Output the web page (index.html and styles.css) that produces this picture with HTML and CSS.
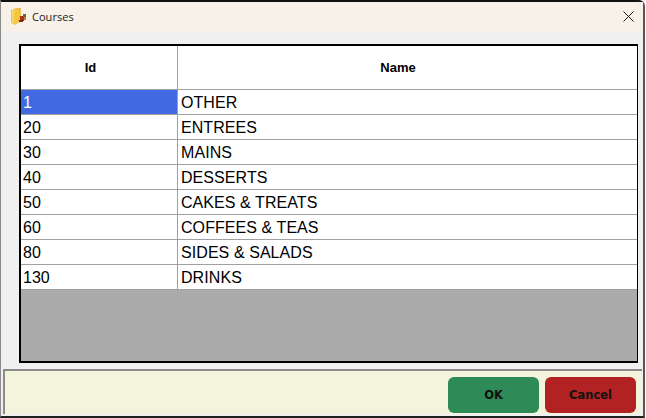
FILE: index.html
```html
<!DOCTYPE html>
<html lang="en">
<head>
<meta charset="utf-8">
<title>Courses</title>
<link rel="stylesheet" href="styles.css">
</head>
<body>
<div class="window">
  <header class="titlebar">
    <svg class="app-icon" width="16" height="17" viewBox="0 0 16 17">
      <defs>
        <linearGradient id="folder" x1="0" y1="0" x2="1" y2="0">
          <stop offset="0" stop-color="#f7dc74"/>
          <stop offset="0.6" stop-color="#f6c945"/>
          <stop offset="1" stop-color="#e2a72e"/>
        </linearGradient>
      </defs>
      <path d="M0.5 2.5 L5 0.5 H9.5 V13 L3.5 16.5 L0.5 14.5 Z" fill="url(#folder)" stroke="#dcb24a" stroke-width="0.7"/>
      <path d="M3.5 4 L9.5 2 V13 L3.5 16.5 Z" fill="#f5c53e"/>
      <rect x="9" y="8" width="4" height="5" fill="#a9341c"/>
      <rect x="12" y="6" width="3" height="3" fill="#5d6e2e"/>
      <rect x="13" y="9" width="2" height="3" fill="#c9783a"/>
      <rect x="8" y="12" width="4" height="2" fill="#7d2a18"/>
    </svg>
    <span class="title">Courses</span>
    <svg class="close" width="11" height="11" viewBox="0 0 11 11">
      <path d="M0.5 0.5 L10.5 10.5 M10.5 0.5 L0.5 10.5" stroke="#1a1a1a" stroke-width="1" fill="none"/>
    </svg>
  </header>
  <main class="content">
    <div class="grid">
      <div class="row head"><div class="cell id">Id</div><div class="cell name">Name</div></div>
      <div class="row selected"><div class="cell id">1</div><div class="cell name">OTHER</div></div>
      <div class="row"><div class="cell id">20</div><div class="cell name">ENTREES</div></div>
      <div class="row"><div class="cell id">30</div><div class="cell name">MAINS</div></div>
      <div class="row"><div class="cell id">40</div><div class="cell name">DESSERTS</div></div>
      <div class="row"><div class="cell id">50</div><div class="cell name">CAKES &amp; TREATS</div></div>
      <div class="row"><div class="cell id">60</div><div class="cell name">COFFEES &amp; TEAS</div></div>
      <div class="row"><div class="cell id">80</div><div class="cell name">SIDES &amp; SALADS</div></div>
      <div class="row"><div class="cell id">130</div><div class="cell name">DRINKS</div></div>
    </div>
  </main>
  <footer class="footer">
    <button class="btn ok">OK</button>
    <button class="btn cancel">Cancel</button>
  </footer>
</div>
</body>
</html>
```
FILE: styles.css
```css
* { box-sizing: border-box; }
html, body { margin: 0; padding: 0; width: 646px; height: 418px; overflow: hidden; background: #fff; }
body { font-family: "Liberation Sans", Arial, sans-serif; color: #000; }
.window {
  width: 645px; height: 418px;
  display: flex; flex-direction: column;
  background: #f0f0f0;
  border-top: 2px solid #111;
  border-left: 1px solid #8a8a8a;
  border-right: 2px solid #555;
  border-bottom: 2px solid #222;
  border-top-right-radius: 6px;
}
.titlebar {
  height: 30px; flex: none;
  display: flex; align-items: center;
  padding: 0 9px 1px 10px;
  background: #f8f1e9;
}
.app-icon { flex: none; margin-right: 5px; }
.title { font-family: "Open Sans", sans-serif; font-size: 11px; letter-spacing: 0.03px; color: #1a1a1a; flex: 1; }
.close { flex: none; }
.content { flex: 1; padding: 12px 5px 6px 18px; min-height: 0; display: flex; }
.grid {
  flex: 1;
  background: #ababab;
  border: 2px solid #000;
  border-right-width: 1px;
  display: flex; flex-direction: column;
}
.row {
  display: flex; height: 25px; flex: none;
  background: #fff;
  border-bottom: 1px solid #a0a0a0;
  font-size: 16px; line-height: 26px;
}
.head { height: 44px; font-size: 13px; font-weight: bold; line-height: 43px; text-align: center; }
.cell { padding-left: 3px; white-space: nowrap; }
.id { width: 157px; flex: none; padding-left: 2px; border-right: 1px solid #a0a0a0; }
.name { flex: 1; letter-spacing: 0.07px; }
.head .id { padding: 0 17px 0 0; }
.head .name { padding: 0 19px 0 0; letter-spacing: 0; }
.selected .id { background: #4169e1; color: #fff; }
.footer {
  height: 45px; flex: none;
  display: flex; justify-content: flex-end; align-items: center; gap: 6px;
  margin: 0 1px 2px 2px;
  padding: 4px 6px 0 0;
  background: #f4f4dc;
  border-top: 2px solid #8a8a8a;
  border-left: 2px solid #8a8a8a;
}
.btn {
  width: 91px; height: 36px; padding: 0;
  border: 0; border-radius: 6px;
  font-family: "DejaVu Sans", sans-serif; font-size: 11.5px; font-weight: bold;
  color: #111;
}
.ok { background: #2e8b57; }
.cancel { background: #b22222; }
```
